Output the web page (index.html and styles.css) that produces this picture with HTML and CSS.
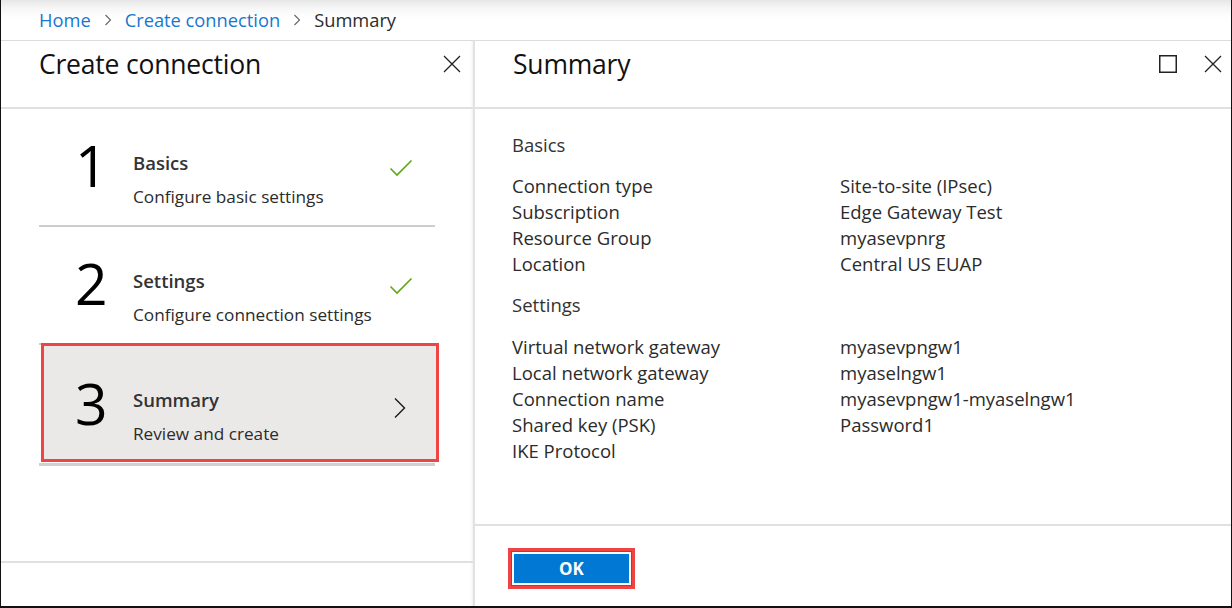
FILE: index.html
```html
<!DOCTYPE html>
<html lang="en">
<head>
<meta charset="utf-8">
<title>Create connection - Summary</title>
<link rel="stylesheet" href="styles.css">
</head>
<body>
<div class="frame">
  <nav class="crumbs">
    <a class="crumb-link" href="#">Home</a>
    <svg class="crumb-sep" width="8" height="12" viewBox="0 0 8 12"><path d="M1.5 1 L6.5 6 L1.5 11" fill="none" stroke="#6b6b6b" stroke-width="1.2"/></svg>
    <a class="crumb-link" href="#">Create connection</a>
    <svg class="crumb-sep" width="8" height="12" viewBox="0 0 8 12"><path d="M1.5 1 L6.5 6 L1.5 11" fill="none" stroke="#6b6b6b" stroke-width="1.2"/></svg>
    <span class="crumb-current">Summary</span>
  </nav>
  <div class="blades">
    <section class="blade blade-left">
      <header class="blade-head">
        <h1 class="blade-title">Create connection</h1>
        <div class="head-icons">
          <svg class="icon" width="18" height="18" viewBox="0 0 18 18"><path d="M1 1 L17 17 M17 1 L1 17" stroke="#222" stroke-width="1.3" fill="none"/></svg>
        </div>
      </header>
      <div class="steps">
        <div class="step">
          <div class="step-num">1</div>
          <div class="step-text">
            <div class="step-title">Basics</div>
            <div class="step-sub">Configure basic settings</div>
          </div>
          <svg class="step-icon" width="24" height="18" viewBox="0 0 24 18"><path d="M1.5 9.5 L8 16 L22.5 1.5" fill="none" stroke="#5ea717" stroke-width="1.6"/></svg>
        </div>
        <div class="step">
          <div class="step-num">2</div>
          <div class="step-text">
            <div class="step-title">Settings</div>
            <div class="step-sub">Configure connection settings</div>
          </div>
          <svg class="step-icon" width="24" height="18" viewBox="0 0 24 18"><path d="M1.5 9.5 L8 16 L22.5 1.5" fill="none" stroke="#5ea717" stroke-width="1.6"/></svg>
        </div>
        <div class="step step-active">
          <div class="step-num">3</div>
          <div class="step-text">
            <div class="step-title">Summary</div>
            <div class="step-sub">Review and create</div>
          </div>
          <svg class="step-icon chevron" width="14" height="22" viewBox="0 0 14 22"><path d="M2 1.5 L11.5 11 L2 20.5" fill="none" stroke="#1a1a1a" stroke-width="1.4"/></svg>
        </div>
      </div>
      <div class="blade-fill"></div>
      <footer class="blade-foot blade-foot-left"></footer>
    </section>
    <section class="blade blade-right">
      <header class="blade-head">
        <h1 class="blade-title">Summary</h1>
        <div class="head-icons">
          <svg class="icon" width="18" height="18" viewBox="0 0 18 18"><rect x="0.75" y="0.75" width="16.5" height="16.5" fill="none" stroke="#222" stroke-width="1.5"/></svg>
          <svg class="icon" width="18" height="18" viewBox="0 0 18 18"><path d="M1 1 L17 17 M17 1 L1 17" stroke="#222" stroke-width="1.3" fill="none"/></svg>
        </div>
      </header>
      <div class="summary">
        <h2 class="group-title">Basics</h2>
        <dl class="props">
          <dt>Connection type</dt><dd>Site-to-site (IPsec)</dd>
          <dt>Subscription</dt><dd>Edge Gateway Test</dd>
          <dt>Resource Group</dt><dd>myasevpnrg</dd>
          <dt>Location</dt><dd>Central US EUAP</dd>
        </dl>
        <h2 class="group-title">Settings</h2>
        <dl class="props">
          <dt>Virtual network gateway</dt><dd>myasevpngw1</dd>
          <dt>Local network gateway</dt><dd>myaselngw1</dd>
          <dt>Connection name</dt><dd>myasevpngw1-myaselngw1</dd>
          <dt>Shared key (PSK)</dt><dd>Password1</dd>
          <dt>IKE Protocol</dt><dd></dd>
        </dl>
      </div>
      <footer class="blade-foot blade-foot-right">
        <div class="ok-wrap"><button class="ok-btn" type="button">OK</button></div>
      </footer>
    </section>
  </div>
</div>
</body>
</html>
```
FILE: styles.css
```css
* { box-sizing: border-box; }
html, body { margin: 0; padding: 0; background: #fff; }
body {
  font-family: "Open Sans", "Noto Sans", sans-serif;
  color: #2b2b2b;
}
.frame {
  width: 1232px;
  height: 608px;
  border-left: 1px solid #111;
  border-right: 1px solid #111;
  border-bottom: 2px solid #111;
  display: flex;
  flex-direction: column;
  overflow: hidden;
}
.crumbs {
  height: 41px;
  flex: none;
  display: flex;
  align-items: center;
  gap: 12px;
  padding: 0 0 1px 38px;
  background: linear-gradient(#e6e6e6 0, #f6f6f6 8px, #fff 18px);
  border-bottom: 1px solid #dcdcdc;
  font-size: 18.3px;
}
.crumb-link { color: #1777cf; text-decoration: none; }
.crumb-sep { flex: none; margin: 0 1px; }
.crumb-current { color: #2b2b2b; }
.blades { flex: 1; display: flex; min-height: 0; }
.blade { display: flex; flex-direction: column; }
.blade-left {
  width: 474px;
  flex: none;
  border-right: 2px solid #e2e2e2;
  box-shadow: inset -3px 0 3px -2px #eee;
}
.blade-right { flex: 1; }
.blade-head {
  height: 68px;
  flex: none;
  display: flex;
  align-items: flex-start;
  justify-content: space-between;
  border-bottom: 2px solid #e0e0e0;
  padding: 5px 9px 0 38px;
}
.blade-left .blade-head { padding-right: 12px; }
.blade-title {
  margin: 0;
  font-size: 26.5px;
  font-weight: 400;
  color: #111;
  letter-spacing: -0.2px;
}
.head-icons { display: flex; gap: 27px; padding-top: 9px; }
.icon { display: block; }
.steps { margin: 0 38px 0 38px; display: flex; flex-direction: column; }
.step {
  height: 118px;
  display: flex;
  align-items: flex-start;
  border-bottom: 2px solid #cdcdcd;
  position: relative;
}
.step-num {
  width: 94px;
  padding-left: 36px;
  font-size: 57px;
  line-height: 1;
  color: #000;
  flex: none;
  margin-top: 28px;
  position: relative;
}
.step-text {
  flex: 1;
  display: flex;
  flex-direction: column;
  gap: 10px;
  margin-top: 41px;
  position: relative;
}
.step-title { font-size: 18.5px; font-weight: 600; color: #333; line-height: 25px; }
.step-sub { font-size: 17.2px; color: #2b2b2b; line-height: 24px; }
.step-icon { flex: none; margin-right: 22px; margin-top: 50px; position: relative; }
.step-active {
  border-bottom: none;
  margin-top: -2px;
  height: 120px;
}
.step-active::before {
  content: "";
  position: absolute;
  left: 3px;
  right: -1px;
  top: 2px;
  bottom: 2px;
  background: #ebe9e7;
}
.step-active::after {
  content: "";
  position: absolute;
  left: 2px;
  right: -4px;
  top: 0;
  bottom: 1px;
  border: 3px solid #f04444;
  pointer-events: none;
  z-index: 2;
}
.step-active .step-num { margin-top: 32px; }
.step-active .step-text { margin-top: 44px; }
.steps::after {
  content: "";
  display: block;
  height: 3px;
  background: #d0d0d0;
  margin-top: 0;
}
.chevron { margin-top: 54px; margin-right: 28px; }
.blade-fill { flex: 1; }
.blade-foot-left { height: 45px; border-top: 2px solid #e0e0e0; flex: none; }
.summary { flex: 1; padding: 23px 20px 0 37px; }
.group-title {
  margin: 0 0 15px 0;
  font-size: 18.5px;
  font-weight: 400;
  color: #333;
  line-height: 26px;
}
.props {
  margin: 0 0 15px 0;
  display: grid;
  grid-template-columns: 328px 1fr;
  font-size: 18.5px;
  line-height: 26px;
  color: #2b2b2b;
}
.props + .group-title { margin-bottom: 16px; }
.props dt, .props dd { margin: 0; }
.blade-foot-right {
  height: 82px;
  flex: none;
  border-top: 2px solid #e0e0e0;
  padding: 22px 0 0 33px;
}
.ok-wrap {
  display: inline-block;
  border: 3px solid #f04444;
  padding: 1px;
}
.ok-btn {
  display: block;
  width: 119px;
  height: 33px;
  background: #0078d4;
  border: 2px solid #fff;
  outline: 1px solid #0078d4;
  color: #fff;
  font-family: "Open Sans", sans-serif;
  font-weight: 700;
  font-size: 17px;
  padding: 0;
}
```
